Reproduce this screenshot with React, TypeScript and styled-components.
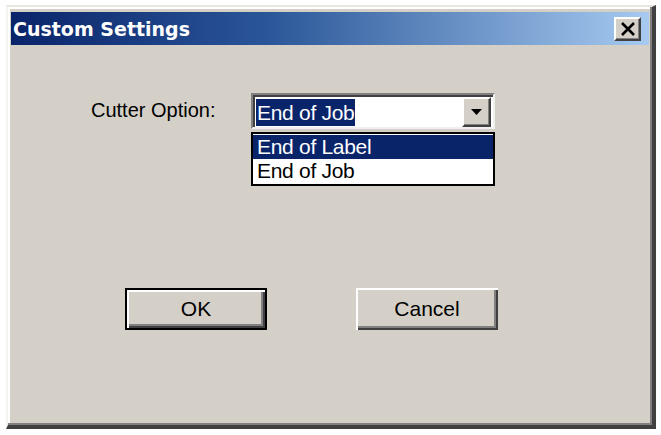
import styled, { createGlobalStyle } from 'styled-components';

const GlobalStyle = createGlobalStyle`
  html, body {
    margin: 0;
    padding: 0;
    background: #ffffff;
  }
`;

const options = ['End of Label', 'End of Job'];

function App() {
  return (
    <>
      <GlobalStyle />
      <Page>
        <Window>
          <TitleBar>
            <Title>Custom Settings</Title>
            <CloseButton aria-label='Close'>
              <svg width='16' height='14' viewBox='0 0 16 14'>
                <path d='M2 1 L14 13 M14 1 L2 13' stroke='#000' strokeWidth='2.6' />
              </svg>
            </CloseButton>
          </TitleBar>
          <Body>
            <FieldRow>
              <Label>Cutter Option:</Label>
              <Combo>
                <ComboField>
                  <SelectedText>End of Job</SelectedText>
                  <ArrowButton>
                    <svg width='11' height='6' viewBox='0 0 11 6'>
                      <path d='M0 0 H11 L5.5 6 Z' fill='#000' />
                    </svg>
                  </ArrowButton>
                </ComboField>
                <DropList>
                  {options.map((o, i) => (
                    <DropItem key={o} $active={i === 0}>
                      {o}
                    </DropItem>
                  ))}
                </DropList>
              </Combo>
            </FieldRow>
            <ButtonRow>
              <DialogButton $default>OK</DialogButton>
              <DialogButton>Cancel</DialogButton>
            </ButtonRow>
          </Body>
        </Window>
      </Page>
    </>
  );
}

export default App;

const Page = styled.div`
  width: 661px;
  height: 435px;
  padding: 5px 0 0 6px;
  box-sizing: border-box;
`;

const Window = styled.div`
  width: 650px;
  height: 424px;
  box-sizing: border-box;
  background: #d4d0c8;
  border-top: 2px solid #e8e6e1;
  border-left: 2px solid #f4f3f0;
  border-right: 4px solid #404040;
  border-bottom: 4px solid #404040;
  box-shadow: inset -2px -2px 0 #808080, inset 2px 2px 0 #ffffff;
  padding: 5px 3px 0 3px;
  display: flex;
  flex-direction: column;
`;

const TitleBar = styled.div`
  height: 33px;
  background: linear-gradient(90deg, #0a246a 0%, #2a5698 40%, #a6caf0 100%);
  display: flex;
  align-items: center;
  justify-content: space-between;
  padding: 0 8px 0 2px;
`;

const Title = styled.span`
  color: #ffffff;
  font-family: 'DejaVu Sans', sans-serif;
  font-weight: bold;
  font-size: 19px;
`;

const CloseButton = styled.div`
  width: 27px;
  height: 24px;
  box-sizing: border-box;
  background: #d4d0c8;
  border-top: 2px solid #ffffff;
  border-left: 2px solid #ffffff;
  border-right: 2px solid #404040;
  border-bottom: 2px solid #404040;
  box-shadow: inset -1px -1px 0 #808080;
  display: flex;
  align-items: center;
  justify-content: center;
`;

const Body = styled.div`
  flex: 1;
  padding: 48px 0 0 0;
  display: flex;
  flex-direction: column;
`;

const FieldRow = styled.div`
  display: flex;
  align-items: flex-start;
  padding-left: 80px;
`;

const Label = styled.span`
  width: 160px;
  padding-top: 6px;
  font-family: 'Liberation Sans', Arial, sans-serif;
  font-size: 20px;
  color: #000;
`;

const Combo = styled.div`
  position: relative;
  width: 244px;
`;

const ComboField = styled.div`
  height: 36px;
  box-sizing: border-box;
  background: #fff;
  border-top: 2px solid #808080;
  border-left: 2px solid #808080;
  border-right: 2px solid #f0f0f0;
  border-bottom: 2px solid #f0f0f0;
  box-shadow: inset 2px 2px 0 #404040;
  display: flex;
  align-items: center;
  justify-content: space-between;
  padding: 2px 2px 0 3px;
`;

const SelectedText = styled.span`
  background: #0a246a;
  color: #fff;
  font-family: 'Liberation Sans', Arial, sans-serif;
  font-size: 21px;
  letter-spacing: -0.3px;
  line-height: 27px;
  padding: 0 1px;
`;

const ArrowButton = styled.div`
  width: 29px;
  height: 30px;
  box-sizing: border-box;
  background: #d4d0c8;
  border-top: 2px solid #ffffff;
  border-left: 2px solid #ffffff;
  border-right: 2px solid #404040;
  border-bottom: 2px solid #404040;
  box-shadow: inset -1px -1px 0 #808080;
  display: flex;
  align-items: center;
  justify-content: center;
`;

const DropList = styled.div`
  position: absolute;
  top: 39px;
  left: 0;
  width: 244px;
  box-sizing: border-box;
  background: #fff;
  border: 2px solid #000;
  padding: 1px 0;
`;

const DropItem = styled.div<{ $active?: boolean }>`
  height: 24px;
  line-height: 24px;
  padding-left: 4px;
  font-family: 'Liberation Sans', Arial, sans-serif;
  font-size: 21px;
  letter-spacing: -0.3px;
  background: ${(p) => (p.$active ? '#0a246a' : '#fff')};
  color: ${(p) => (p.$active ? '#fff' : '#000')};
`;

const ButtonRow = styled.div`
  display: flex;
  gap: 89px;
  padding: 159px 0 0 114px;
`;

const DialogButton = styled.div<{ $default?: boolean }>`
  width: 142px;
  height: 42px;
  box-sizing: border-box;
  background: #d4d0c8;
  display: flex;
  align-items: center;
  justify-content: center;
  font-family: 'Liberation Sans', Arial, sans-serif;
  font-size: 21px;
  color: #000;
  border: ${(p) => (p.$default ? '2px solid #000' : 'none')};
  box-shadow: ${(p) =>
    p.$default
      ? 'inset 2px 2px 0 #fff, inset -2px -2px 0 #404040, inset -4px -4px 0 #808080'
      : 'inset 2px 2px 0 #fff, inset -2px -2px 0 #404040, inset -4px -4px 0 #808080'};
`;
